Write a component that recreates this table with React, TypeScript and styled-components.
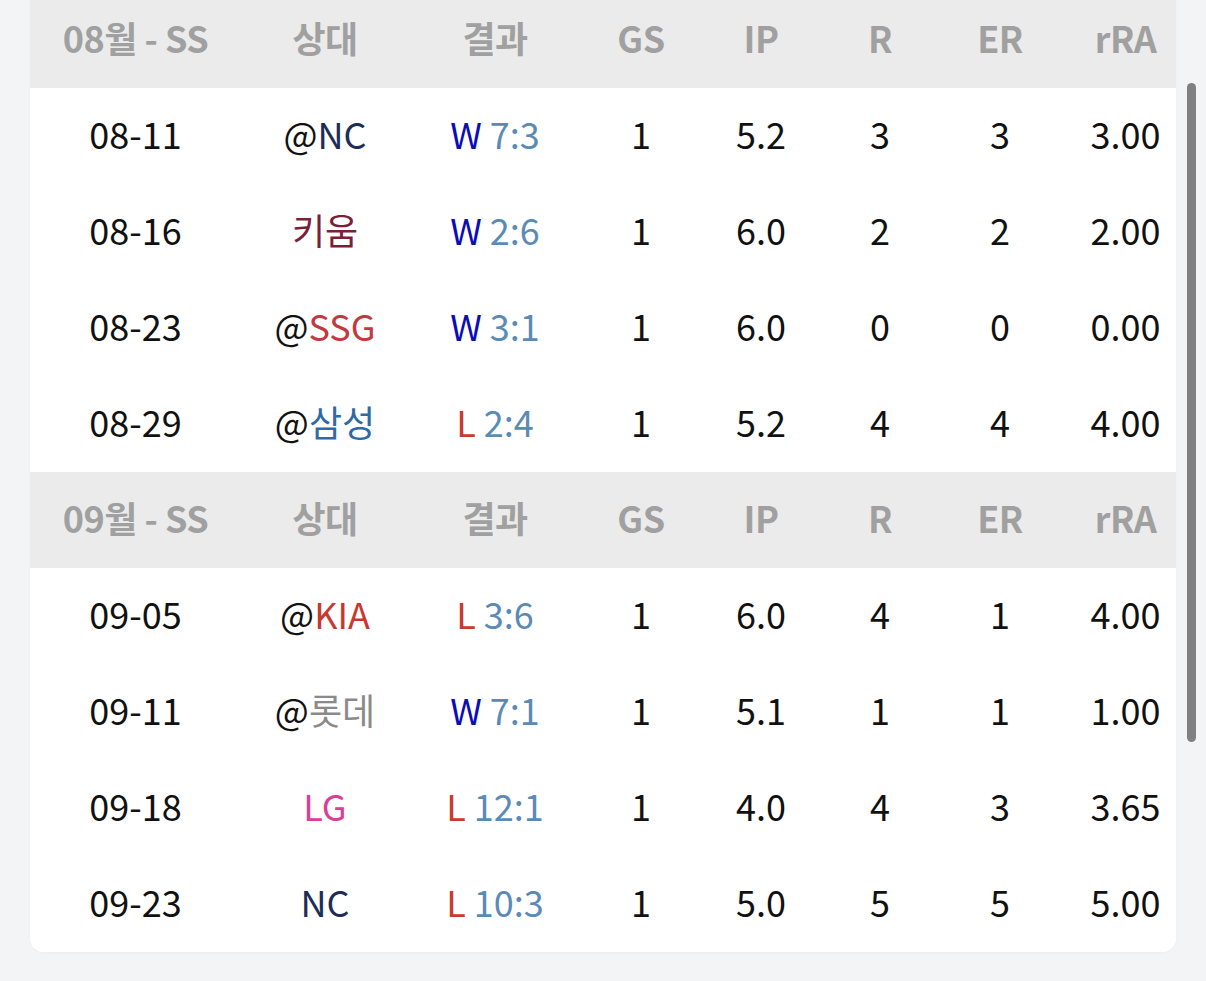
import React from "react";
import styled, { createGlobalStyle } from "styled-components";

const GlobalStyle = createGlobalStyle`
  html, body {
    margin: 0;
    padding: 0;
    background: #f3f4f6;
    overflow: hidden;
  }
  body {
    font-family: "Noto Sans CJK KR", "Noto Sans", sans-serif;
  }
`;

const Page = styled.div`
  position: relative;
  width: 1206px;
  height: 981px;
  padding: 0 30px;
  box-sizing: border-box;
  background: #f3f4f6;
  overflow: hidden;
`;

const Card = styled.div`
  margin-top: -8px;
  background: #ffffff;
  border-radius: 0 0 14px 14px;
  overflow: hidden;
  box-shadow: 0 1px 3px rgba(0, 0, 0, 0.03);
`;

const Grid = styled.div<{ $head?: boolean }>`
  display: grid;
  grid-template-columns: 211px 168px 172px 120px 120px 118px 122px 1fr;
  height: 96px;
  align-items: center;
  background: ${(p) => (p.$head ? "#ebebeb" : "#ffffff")};
`;

const HeadCell = styled.div`
  text-align: center;
  font-family: "Noto Sans CJK KR", "Noto Sans", sans-serif;
  font-weight: 700;
  font-size: 36px;
  color: #a0a0a0;
  line-height: 1;
  padding-bottom: 7px;
  letter-spacing: -0.5px;
  &:nth-child(8) {
    padding-left: 14px;
  }
`;

const Cell = styled.div`
  text-align: center;
  font-family: "Noto Sans CJK KR", "Noto Sans", sans-serif;
  font-weight: 400;
  font-size: 36px;
  color: #111111;
  line-height: 1;
  white-space: nowrap;
  padding-bottom: 7px;
  &:nth-child(8) {
    padding-left: 14px;
  }
`;

const Team = styled.span<{ $c: string }>`
  color: ${(p) => p.$c};
`;

const Outcome = styled.span<{ $win: boolean }>`
  color: ${(p) => (p.$win ? "#0b0bb8" : "#c93a30")};
  margin-right: 8px;
`;

const Score = styled.span`
  color: #5a8bb6;
`;

const Scrollbar = styled.div`
  position: absolute;
  left: 1187px;
  top: 83px;
  width: 9px;
  height: 659px;
  border-radius: 5px;
  background: #808080;
`;

const teamColors: Record<string, string> = {
  NC: "#1c2e58",
  키움: "#7b1e38",
  SSG: "#c23a40",
  삼성: "#2f69a6",
  KIA: "#c8382f",
  롯데: "#8a8a8a",
  LG: "#d6409a",
};

type Game = {
  date: string;
  away: boolean;
  team: string;
  win: boolean;
  score: string;
  gs: string;
  ip: string;
  r: string;
  er: string;
  rra: string;
};

const months: { title: string; games: Game[] }[] = [
  {
    title: "08월 - SS",
    games: [
      { date: "08-11", away: true, team: "NC", win: true, score: "7:3", gs: "1", ip: "5.2", r: "3", er: "3", rra: "3.00" },
      { date: "08-16", away: false, team: "키움", win: true, score: "2:6", gs: "1", ip: "6.0", r: "2", er: "2", rra: "2.00" },
      { date: "08-23", away: true, team: "SSG", win: true, score: "3:1", gs: "1", ip: "6.0", r: "0", er: "0", rra: "0.00" },
      { date: "08-29", away: true, team: "삼성", win: false, score: "2:4", gs: "1", ip: "5.2", r: "4", er: "4", rra: "4.00" },
    ],
  },
  {
    title: "09월 - SS",
    games: [
      { date: "09-05", away: true, team: "KIA", win: false, score: "3:6", gs: "1", ip: "6.0", r: "4", er: "1", rra: "4.00" },
      { date: "09-11", away: true, team: "롯데", win: true, score: "7:1", gs: "1", ip: "5.1", r: "1", er: "1", rra: "1.00" },
      { date: "09-18", away: false, team: "LG", win: false, score: "12:1", gs: "1", ip: "4.0", r: "4", er: "3", rra: "3.65" },
      { date: "09-23", away: false, team: "NC", win: false, score: "10:3", gs: "1", ip: "5.0", r: "5", er: "5", rra: "5.00" },
    ],
  },
];

const headers = ["상대", "결과", "GS", "IP", "R", "ER", "rRA"];

export default function App() {
  return (
    <>
      <GlobalStyle />
      <Page>
        <Card>
          {months.map((m) => (
            <React.Fragment key={m.title}>
              <Grid $head>
                <HeadCell>{m.title}</HeadCell>
                {headers.map((h) => (
                  <HeadCell key={h}>{h}</HeadCell>
                ))}
              </Grid>
              {m.games.map((g) => (
                <Grid key={g.date}>
                  <Cell>{g.date}</Cell>
                  <Cell>
                    {g.away ? "@" : ""}
                    <Team $c={teamColors[g.team]}>{g.team}</Team>
                  </Cell>
                  <Cell>
                    <Outcome $win={g.win}>{g.win ? "W" : "L"}</Outcome>
                    <Score>{g.score}</Score>
                  </Cell>
                  <Cell>{g.gs}</Cell>
                  <Cell>{g.ip}</Cell>
                  <Cell>{g.r}</Cell>
                  <Cell>{g.er}</Cell>
                  <Cell>{g.rra}</Cell>
                </Grid>
              ))}
            </React.Fragment>
          ))}
        </Card>
        <Scrollbar />
      </Page>
    </>
  );
}
